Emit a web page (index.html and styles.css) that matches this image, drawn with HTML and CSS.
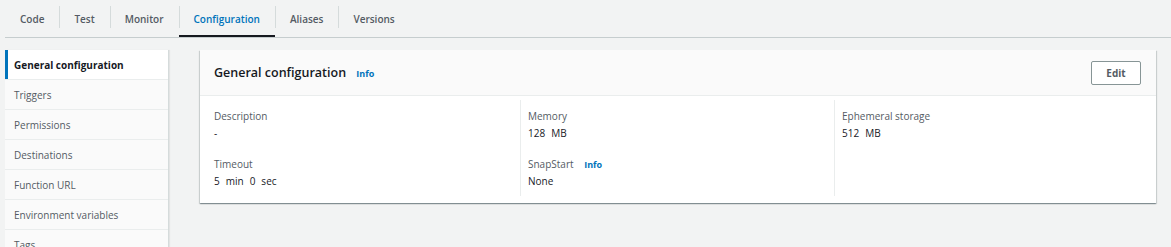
FILE: index.html
```html
<!DOCTYPE html>
<html lang="en">
<head>
    <meta charset="UTF-8">
    <meta name="viewport" content="width=device-width, initial-scale=1.0">
    <title>Function configuration</title>
    <link rel="stylesheet" href="styles.css">
</head>
<body>
    <!-- Onglets -->
    <nav class="tabs">
        <a class="tab">Code</a>
        <a class="tab">Test</a>
        <a class="tab">Monitor</a>
        <a class="tab active">Configuration</a>
        <a class="tab">Aliases</a>
        <a class="tab">Versions</a>
    </nav>

    <main class="layout">
        <ul class="side-nav">
            <li class="active">General configuration</li>
            <li>Triggers</li>
            <li>Permissions</li>
            <li>Destinations</li>
            <li>Function URL</li>
            <li>Environment variables</li>
            <li>Tags</li>
        </ul>

        <section class="card">
            <div class="card-header">
                <h2>General configuration <a class="info">Info</a></h2>
                <button class="button">Edit</button>
            </div>
            <div class="card-body">
                <div class="column">
                    <div class="field">
                        <div class="label">Description</div>
                        <div class="value">-</div>
                    </div>
                    <div class="field">
                        <div class="label">Timeout</div>
                        <div class="value"><span>5</span><span>min</span><span>0</span><span>sec</span></div>
                    </div>
                </div>
                <div class="column">
                    <div class="field">
                        <div class="label">Memory</div>
                        <div class="value"><span>128</span><span>MB</span></div>
                    </div>
                    <div class="field">
                        <div class="label">SnapStart <a class="info">Info</a></div>
                        <div class="value">None</div>
                    </div>
                </div>
                <div class="column">
                    <div class="field">
                        <div class="label">Ephemeral storage</div>
                        <div class="value"><span>512</span><span>MB</span></div>
                    </div>
                </div>
            </div>
        </section>
    </main>
</body>
</html>
```

FILE: styles.css
```css
body {
    font-family: "Open Sans", Arial, sans-serif;
    font-size: 10px;
    margin: 0;
    padding: 0;
    background-color: #f2f3f3;
    color: #16191f;
    overflow: hidden;
}
.tabs {
    display: flex;
    height: 37px;
    margin-left: 5px;
    border-bottom: 1px solid #c6cdce;
}
.tab {
    position: relative;
    display: flex;
    align-items: center;
    padding: 0 15px;
    font-weight: 600;
    color: #545b64;
}
.tab + .tab::before {
    content: "";
    position: absolute;
    left: 0;
    top: 6px;
    height: 22px;
    border-left: 1px solid #d5dbdb;
}
.tab.active {
    color: #0073bb;
}
.tab.active::after {
    content: "";
    position: absolute;
    left: 0;
    right: 0;
    bottom: 0;
    height: 2px;
    background-color: #16191f;
}
.layout {
    display: flex;
    gap: 32px;
    padding: 12px 0 0 5px;
}
.side-nav {
    list-style: none;
    margin: 0;
    padding: 0;
    width: 163px;
    flex-shrink: 0;
    box-shadow: 1px 0 0 #d5dbdb, 2px 0 1px rgba(0, 0, 0, 0.06);
}
.side-nav li {
    height: 28px;
    line-height: 29px;
    padding: 1px 0 0 9px;
    color: #545b64;
    background-color: #fafafa;
    border-bottom: 1px solid #eaeded;
}
.side-nav li.active {
    background-color: white;
    color: #16191f;
    font-weight: 700;
    box-shadow: inset 3px 0 0 #0073bb;
}
.card {
    width: 956px;
    align-self: flex-start;
    background-color: white;
    box-shadow: 0 1px 1px 0 rgba(0, 28, 36, 0.3), 1px 1px 1px 0 rgba(0, 28, 36, 0.12), -1px 1px 1px 0 rgba(0, 28, 36, 0.12);
}
.card-header {
    display: flex;
    align-items: center;
    justify-content: space-between;
    height: 45px;
    padding: 0 14px;
    background-color: #fafafa;
    border-bottom: 1px solid #eaeded;
}
.card-header h2 {
    margin: 0;
    font-size: 12.5px;
    font-weight: 600;
    color: #16191f;
}
.info {
    margin-left: 7px;
    font-size: 9px;
    font-weight: 700;
    color: #0073bb;
}
.button {
    width: 50px;
    height: 24px;
    font-family: inherit;
    font-size: 10px;
    font-weight: 700;
    color: #545b64;
    background-color: white;
    border: 1px solid #879596;
    border-radius: 2px;
    cursor: pointer;
    margin-right: 1px;
}
.card-body {
    display: grid;
    grid-template-columns: repeat(3, 314px);
    padding: 4px 8px 7px 6px;
}
.column {
    padding: 8px 0 7px 8px;
}
.column + .column {
    border-left: 1px solid #eaeded;
    padding-left: 7px;
}
.field + .field {
    margin-top: 15px;
}
.label {
    height: 16px;
    line-height: 16px;
    color: #545b64;
}
.label .info {
    margin-left: 8px;
    line-height: 1;
}
.value {
    line-height: 16px;
    margin-top: 1px;
}
.value span + span {
    margin-left: 6px;
}
```
